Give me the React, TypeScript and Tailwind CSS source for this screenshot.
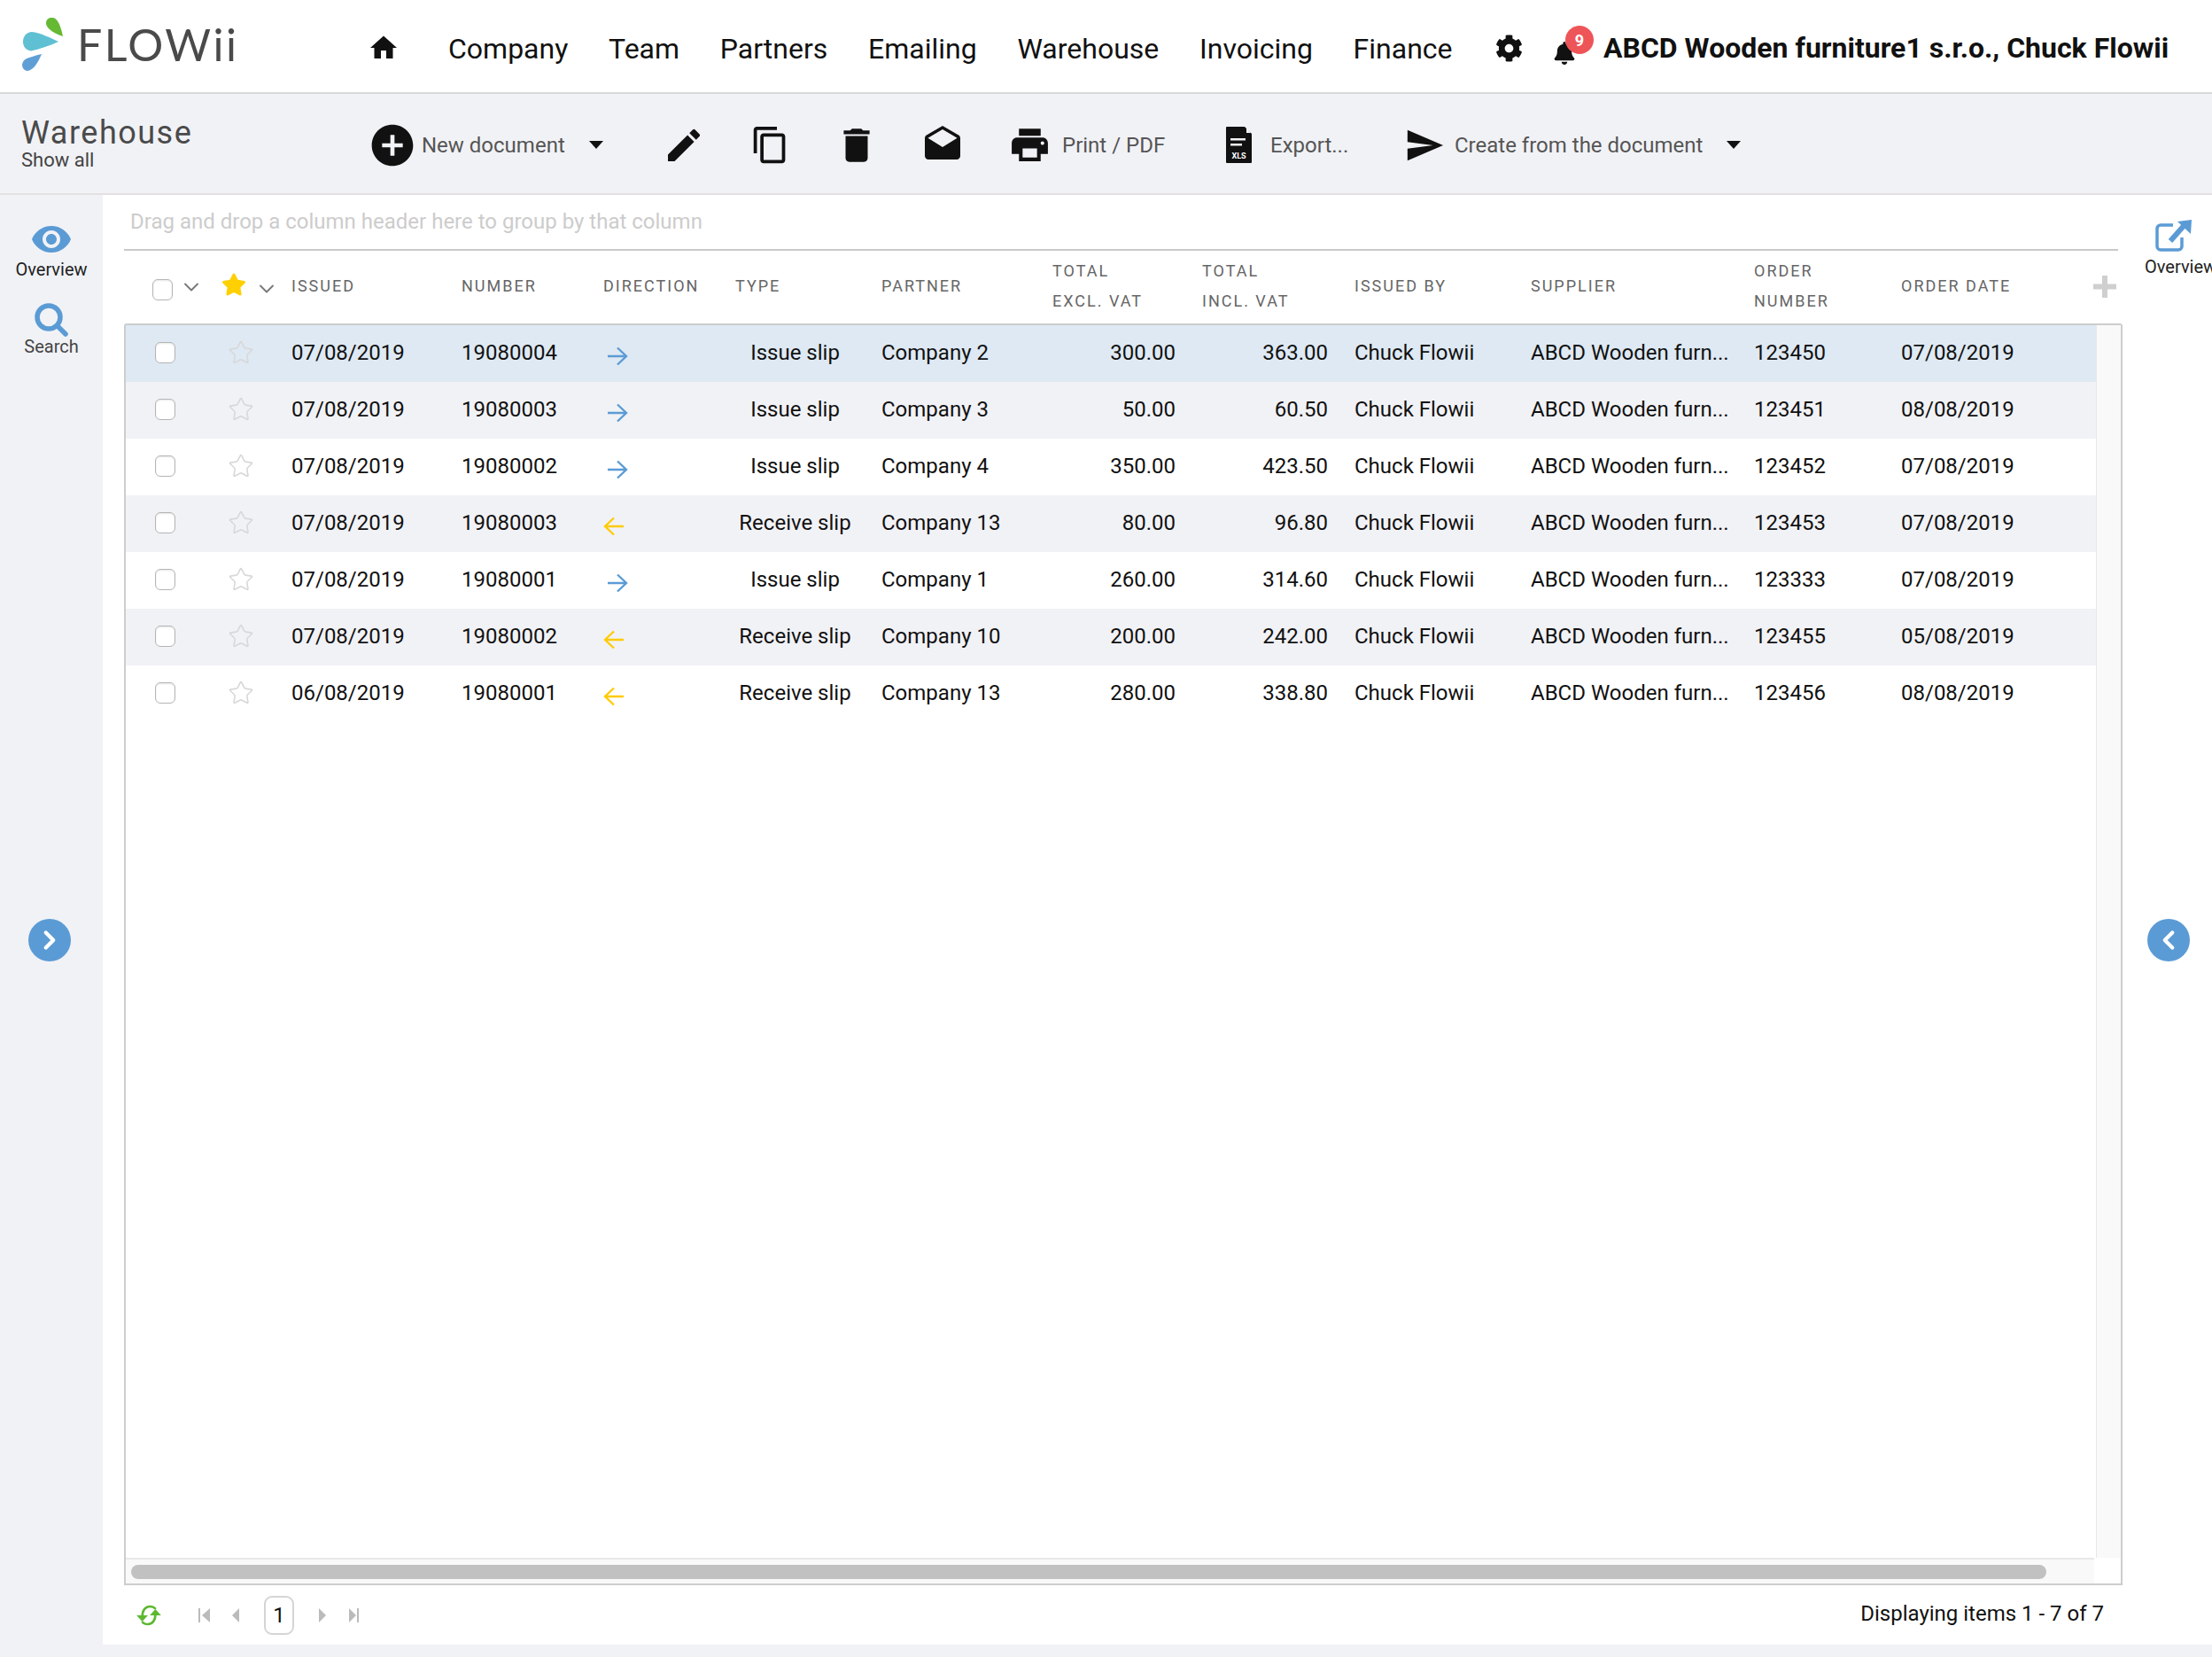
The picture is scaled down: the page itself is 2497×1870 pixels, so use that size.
import { ChevronDown, ChevronLeft, ChevronRight, Star } from 'lucide-react';
import { FaBell, FaCog, FaStar } from 'react-icons/fa';
import {
  MdAddCircle,
  MdContentCopy,
  MdDelete,
  MdDrafts,
  MdEdit,
  MdHome,
  MdPrint,
  MdSend,
} from 'react-icons/md';

const rows = [
  ['07/08/2019', '19080004', 'out', 'Issue slip', 'Company 2', '300.00', '363.00', '123450', '07/08/2019'],
  ['07/08/2019', '19080003', 'out', 'Issue slip', 'Company 3', '50.00', '60.50', '123451', '08/08/2019'],
  ['07/08/2019', '19080002', 'out', 'Issue slip', 'Company 4', '350.00', '423.50', '123452', '07/08/2019'],
  ['07/08/2019', '19080003', 'in', 'Receive slip', 'Company 13', '80.00', '96.80', '123453', '07/08/2019'],
  ['07/08/2019', '19080001', 'out', 'Issue slip', 'Company 1', '260.00', '314.60', '123333', '07/08/2019'],
  ['07/08/2019', '19080002', 'in', 'Receive slip', 'Company 10', '200.00', '242.00', '123455', '05/08/2019'],
  ['06/08/2019', '19080001', 'in', 'Receive slip', 'Company 13', '280.00', '338.80', '123456', '08/08/2019'],
];

const navItems = ['Company', 'Team', 'Partners', 'Emailing', 'Warehouse', 'Invoicing', 'Finance'];

const Caret = () => (
  <svg width="16" height="9" viewBox="0 0 16 9" className="shrink-0">
    <polygon points="0,0 16,0 8,9" fill="#111" />
  </svg>
);

const IconBox = ({ width, className = '', children }: { width: string; className?: string; children: React.ReactNode }) => (
  <div className={`flex shrink-0 items-center justify-center ${width} ${className}`}>{children}</div>
);

const Logo = () => (
  <div className="flex items-center">
    <svg width="80" height="104" viewBox="0 0 80 104" className="shrink-0">
      <path d="M71 41 C64 39 52 33 52 26 C52 21 56 19.5 60 20 C66 21 69 32 71 41 Z" fill="#66b933" />
      <path d="M66 47 C56 52 42 56 35 57.5 C29 57 26 52 26 47 C26 41 30 36 36 36 C45 37 58 43 66 47 Z" fill="#5fc0d3" />
      <path d="M47 61 C44 68 39 79 31 80 C27 80 25 76 25 73 C26 68 29 66 33 65 C37 63.5 43 62 47 61 Z" fill="#5f9fd6" />
    </svg>
    <span className="mb-[4px] ml-[7px] [font-family:Lato,sans-serif] text-[50px] leading-none tracking-[2.5px] text-[#4a4a4a]">FLOWii</span>
  </div>
);

const TopBar = () => (
  <header className="flex h-[106px] shrink-0 items-center border-b-2 border-[#d8d8d8] bg-white">
    <div className="w-[417px] shrink-0"><Logo /></div>
    <IconBox width="w-[31px]" className="mt-[3px]"><MdHome size={36} color="#111" className="shrink-0" /></IconBox>
    <nav className="ml-[58px] mt-[6px] flex w-[1182px] shrink-0 gap-[45.75px] text-[32px] leading-none text-[#111]">
      {navItems.map((item) => (
        <span key={item}>{item}</span>
      ))}
    </nav>
    <FaCog size={31} color="#111" className="mt-[5px] shrink-0" />
    <div className="relative ml-[34px] mt-[6px] h-[32px] w-[57px] shrink-0">
      <FaBell size={26} color="#111" className="mt-[8px]" />
      <span className="absolute left-[14px] top-[-10px] flex h-[32px] w-[32px] items-center justify-center rounded-full bg-[#ee5558] text-[18px] font-bold text-white">9</span>
    </div>
    <span className="mt-[3px] whitespace-nowrap text-[32px] font-bold leading-none text-[#111]">ABCD Wooden furniture1 s.r.o., Chuck Flowii</span>
  </header>
);

const ToolBar = () => (
  <div className="flex h-[114px] shrink-0 items-center border-b-2 border-[#e5dfe1] bg-[#f1f2f6] pt-[3px] text-[24px] text-[#555]">
    <div className="mt-[-3px] w-[419px] shrink-0 pl-[24px]">
      <div className="text-[36px] leading-[38px] tracking-[1.5px] text-[#4a4a4a]">Warehouse</div>
      <div className="text-[22px] leading-[24px] text-[#444]">Show all</div>
    </div>
    <IconBox width="w-[47px]"><MdAddCircle size={56} color="#111" className="shrink-0" /></IconBox>
    <span className="ml-[10px] w-[162px] shrink-0 whitespace-nowrap">New document</span>
    <div className="ml-[27px]"><Caret /></div>
    <IconBox width="w-[36px]" className="ml-[73px]"><MdEdit size={48} color="#111" className="shrink-0" /></IconBox>
    <IconBox width="w-[35px]" className="ml-[62px]"><MdContentCopy size={45} color="#111" className="shrink-0" /></IconBox>
    <IconBox width="w-[30px]" className="ml-[65px]"><MdDelete size={50} color="#111" className="shrink-0" /></IconBox>
    <IconBox width="w-[40px]" className="ml-[62px]"><MdDrafts size={48} color="#111" className="shrink-0" /></IconBox>
    <IconBox width="w-[41px]" className="ml-[58px]"><MdPrint size={49} color="#111" className="shrink-0" /></IconBox>
    <span className="ml-[16px] w-[115px] shrink-0 whitespace-nowrap">Print / PDF</span>
    <div className="relative ml-[70px] h-[41px] w-[29px] shrink-0">
      <svg width="29" height="41" viewBox="0 0 29 41">
        <path d="M0 1 a1 1 0 0 1 1 -1 H21 L29 8 V40 a1 1 0 0 1 -1 1 H1 a1 1 0 0 1 -1 -1 Z" fill="#111" />
        <polygon points="23,1 28,7 23,7" fill="#f1f2f6" />
        <rect x="5" y="13" width="17" height="2.5" fill="#f1f2f6" />
        <rect x="5" y="19" width="13" height="2.5" fill="#f1f2f6" />
      </svg>
      <span className="absolute bottom-[3px] left-0 w-full text-center text-[9px] font-bold leading-[10px] text-white">XLS</span>
    </div>
    <span className="ml-[21px] w-[87px] shrink-0 whitespace-nowrap">Export...</span>
    <IconBox width="w-[40px]" className="ml-[67px]"><MdSend size={46} color="#111" className="shrink-0" /></IconBox>
    <span className="ml-[14px] w-[280px] shrink-0 whitespace-nowrap">Create from the document</span>
    <div className="ml-[27px]"><Caret /></div>
  </div>
);

const SideBar = () => (
  <aside className="flex w-[116px] shrink-0 flex-col items-center pt-[34px] text-[20px] leading-[24px]">
    <svg width="44" height="32" viewBox="1 4 22 16" fill="#5b9bd5" className="shrink-0">
      <path d="M12 4.5C7 4.5 2.73 7.61 1 12c1.73 4.39 6 7.5 11 7.5s9.27-3.11 11-7.5c-1.73-4.39-6-7.5-11-7.5zM12 17c-2.76 0-5-2.24-5-5s2.24-5 5-5 5 2.24 5 5-2.24 5-5 5zm0-8c-1.66 0-3 1.34-3 3s1.34 3 3 3 3-1.34 3-3-1.34-3-3-3z" />
    </svg>
    <span className="mt-[6px] text-[#222]">Overview</span>
    <svg width="38" height="38" viewBox="0 0 38 38" className="mt-[26px] shrink-0" fill="none" stroke="#5b9bd5" strokeWidth="5.5" strokeLinecap="round">
      <circle cx="16" cy="16" r="13" />
      <line x1="26" y1="26" x2="35" y2="35" />
    </svg>
    <span className="mt-[-1px] text-[#444]">Search</span>
    <button className="ml-[-4px] mt-[634px] flex h-[48px] w-[48px] items-center justify-center rounded-full bg-[#5b9bd5]">
      <ChevronRight size={34} color="#fff" strokeWidth={3} />
    </button>
  </aside>
);

const gridCols =
  'grid-cols-[108px_79px_192px_160px_149px_165px_193px_169px_172px_199px_252px_166px_220px]';

const checkboxClass =
  'block h-[24px] w-[23px] appearance-none rounded-[6px] border border-[#b5b5b5] bg-white shadow-[inset_0_1px_2px_rgba(0,0,0,0.1)]';

const HeaderCell = ({ children }: { children: React.ReactNode }) => (
  <div className="mb-[2px] flex flex-col justify-center text-[18px] leading-[34px] tracking-[2px] text-[#666]">{children}</div>
);

const TableHeader = () => (
  <div className={`relative grid h-[82px] shrink-0 pl-[2px] ${gridCols}`}>
    <div className="flex items-center pl-[30px]">
      <input type="checkbox" className={`mt-[5px] ${checkboxClass}`} />
      <IconBox width="w-[14px]" className="ml-[14px]"><ChevronDown size={28} color="#777" strokeWidth={1.6} className="shrink-0" /></IconBox>
    </div>
    <div className="flex items-center">
      <FaStar size={28} color="#ffd000" className="mb-[6px] shrink-0" />
      <IconBox width="w-[15px]" className="ml-[15px] mt-[4px]"><ChevronDown size={28} color="#777" strokeWidth={1.6} className="shrink-0" /></IconBox>
    </div>
    <HeaderCell>ISSUED</HeaderCell>
    <HeaderCell>NUMBER</HeaderCell>
    <HeaderCell>DIRECTION</HeaderCell>
    <HeaderCell>TYPE</HeaderCell>
    <HeaderCell>PARTNER</HeaderCell>
    <HeaderCell><span>TOTAL</span><span>EXCL. VAT</span></HeaderCell>
    <HeaderCell><span>TOTAL</span><span>INCL. VAT</span></HeaderCell>
    <HeaderCell>ISSUED BY</HeaderCell>
    <HeaderCell>SUPPLIER</HeaderCell>
    <HeaderCell><span>ORDER</span><span>NUMBER</span></HeaderCell>
    <HeaderCell>ORDER DATE</HeaderCell>
    <span className="absolute left-[2223px] top-[28px] h-[25px] w-[26px]">
      <svg width="26" height="25" viewBox="0 0 26 25"><path d="M10 0h6v9.500h10v6H16V25h-6v-9.500H0v-6h10z" fill="#cfcfcf" /></svg>
    </span>
  </div>
);

const DirectionArrow = ({ dir }: { dir: string }) =>
  dir === 'out' ? (
    <svg width="24" height="22" viewBox="0 0 24 22" fill="none" stroke="#5b9bd5" strokeWidth="2.4" className="ml-[4px] mt-[8px]">
      <path d="M1 11H22M12 1.500L22 11L12 20.500" />
    </svg>
  ) : (
    <svg width="24" height="22" viewBox="0 0 24 22" fill="none" stroke="#ffcb05" strokeWidth="2.4" className="mt-[8px]">
      <path d="M23 11H2M12 1.500L2 11L12 20.500" />
    </svg>
  );

const TableRow = ({ row, index }: { row: string[]; index: number }) => {
  const bg = index === 0 ? 'bg-[#dee9f3]' : index % 2 === 1 ? 'bg-[#f1f2f6]' : 'bg-white';
  return (
    <div className={`grid h-[64px] items-center pb-[2px] text-[24px] text-[#111] ${gridCols} ${bg}`}>
      <div className="pl-[33px]">
        <input type="checkbox" className={checkboxClass} />
      </div>
      <IconBox width="w-[28px]" className="ml-[8px]"><Star size={30} color="#d8d8d8" strokeWidth={1.3} className="shrink-0" /></IconBox>
      <div>{row[0]}</div>
      <div>{row[1]}</div>
      <DirectionArrow dir={row[2]} />
      <div className="w-[135px] text-center">{row[3]}</div>
      <div>{row[4]}</div>
      <div className="pr-[30px] text-right">{row[5]}</div>
      <div className="pr-[30px] text-right">{row[6]}</div>
      <div>Chuck Flowii</div>
      <div className="whitespace-nowrap">ABCD Wooden furn...</div>
      <div>{row[7]}</div>
      <div>{row[8]}</div>
    </div>
  );
};

const Pager = () => (
  <div className="relative flex h-[67px] shrink-0 items-center pl-[11px] pr-[21px]">
    <svg width="34" height="24" viewBox="0 0 32 24" preserveAspectRatio="none" fill="none" stroke="#5db830" strokeWidth="2.6" className="shrink-0">
      <path d="M9 13 C9 7 12 2 17 2 C20 2 22 3 23 5" />
      <path d="M23 11 C23 17 20 22 15 22 C12 22 10 21 9 19" />
      <polygon points="3,12 15,12 9,19" fill="#5db830" stroke="none" />
      <polygon points="17,12 29,12 23,5" fill="#5db830" stroke="none" />
    </svg>
    <svg width="13" height="16" viewBox="0 0 13 16" fill="#bbb" className="ml-[39px] shrink-0">
      <rect width="2" height="16" /><polygon points="13,0 13,16 4,8" />
    </svg>
    <svg width="8" height="16" viewBox="0 0 8 16" fill="#bbb" className="ml-[25px] shrink-0">
      <polygon points="8,0 8,16 0,8" />
    </svg>
    <div className="ml-[28px] flex h-[44px] w-[34px] shrink-0 items-center justify-center rounded-[9px] border-2 border-[#d5d5d5] text-[24px] text-[#111]">1</div>
    <svg width="8" height="16" viewBox="0 0 8 16" fill="#bbb" className="ml-[28px] shrink-0">
      <polygon points="0,0 0,16 8,8" />
    </svg>
    <svg width="11" height="16" viewBox="0 0 11 16" fill="#bbb" className="ml-[26px] shrink-0">
      <polygon points="0,0 0,16 8,8" /><rect x="9" width="2" height="16" />
    </svg>
    <span className="mb-[3px] ml-auto text-[24px] text-[#111]">Displaying items 1 - 7 of 7</span>
  </div>
);

const DataGrid = () => (
  <div className="ml-[24px] flex w-[2256px] shrink-0 flex-col">
    <div className="flex h-[63px] w-[2251px] shrink-0 items-center border-b-2 border-[#c9c9c9] pb-[2px] pl-[7px] text-[24px] text-[#ccc]">
      Drag and drop a column header here to group by that column
    </div>
    <TableHeader />
    <div className="flex min-h-0 flex-1 flex-col rounded-t-[3px] border-2 border-[#cdcdcd]">
      <div className="flex min-h-0 flex-1">
        <div className="w-[2224px] shrink-0">
          {rows.map((row, i) => (
            <TableRow key={i} row={row} index={i} />
          ))}
        </div>
        <div className="flex-1 border-l border-[#e8e8e8] bg-[#f9f9f9]" />
      </div>
      <div className="h-[29px] w-[2222px] shrink-0 border-t-2 border-[#e8e8e8] bg-[#f9f9f9] pl-[6px] pt-[6px]">
        <div className="h-[16px] w-[2162px] rounded-full bg-[#c1c1c1]" />
      </div>
    </div>
    <Pager />
  </div>
);

const RightPanel = () => (
  <div className="flex min-w-0 flex-1 flex-col overflow-hidden pt-[28px] text-[20px] leading-[24px] text-[#222]">
    <svg width="42" height="36" viewBox="0 0 42 36" className="ml-[37px] shrink-0" fill="none" stroke="#5b9bd5" strokeWidth="3.5">
      <path d="M20 6H6a4 4 0 0 0 -4 4V30a4 4 0 0 0 4 4H26a4 4 0 0 0 4 -4V20" />
      <path d="M17 24L32 7" strokeWidth="6" />
      <polygon points="25,2 41,0 40,16" fill="#5b9bd5" stroke="none" />
    </svg>
    <span className="ml-[25px] mt-[5px] whitespace-nowrap">Overview</span>
    <button className="ml-[28px] mt-[724px] flex h-[48px] w-[48px] shrink-0 items-center justify-center rounded-full bg-[#5b9bd5]">
      <ChevronLeft size={34} color="#fff" strokeWidth={3} />
    </button>
  </div>
);

export default function App() {
  return (
    <div className="flex h-[1870px] w-[2497px] flex-col overflow-hidden bg-[#f1f2f6] [font-family:Roboto,sans-serif]">
      <TopBar />
      <ToolBar />
      <div className="flex min-h-0 flex-1 pb-[14px]">
        <SideBar />
        <main className="flex min-w-0 flex-1 bg-white">
          <DataGrid />
          <RightPanel />
        </main>
      </div>
    </div>
  );
}
